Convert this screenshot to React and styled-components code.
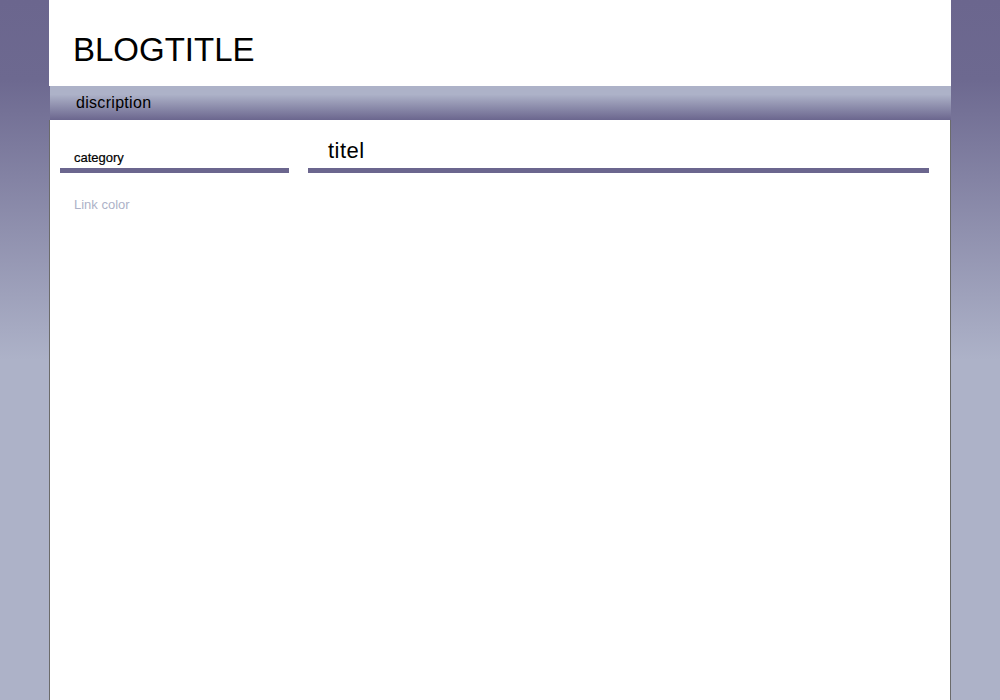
import styled, { createGlobalStyle } from 'styled-components';

const GlobalStyle = createGlobalStyle`
  html, body {
    margin: 0;
    padding: 0;
  }
  body {
    min-height: 700px;
    background-color: #adb2c8;
    background-image: linear-gradient(to bottom, #6b668e 0px, #6d6990 80px, #adb2c8 360px);
    background-repeat: repeat-x;
    background-size: 100% 360px;
    font-family: "Liberation Sans", Arial, sans-serif;
    color: #000;
  }
`;

const Page = styled.div`
  width: 902px;
  margin: 0 auto;
`;

const Header = styled.header`
  height: 86px;
  background: #fff;
  padding-left: 24px;
  box-sizing: border-box;
  display: flex;
  align-items: flex-end;
`;

const BlogTitle = styled.h1`
  margin: 0 0 17px;
  font-size: 33px;
  font-weight: normal;
  line-height: 38px;
`;

const DescBar = styled.div`
  height: 34px;
  margin-left: 1px;
  padding-left: 26px;
  background: linear-gradient(to bottom, #adb2c8 0%, #adb2c8 25%, #6b668e 100%);
  font-size: 16px;
  line-height: 34px;
  letter-spacing: 0.3px;
`;

const Content = styled.div`
  min-height: 580px;
  background: #fff;
  border-left: 1px solid #6b6b6b;
  border-right: 1px solid #6b6b6b;
  display: flex;
  gap: 19px;
  padding: 0 21px 0 10px;
`;

const Sidebar = styled.aside`
  width: 229px;
  flex-shrink: 0;
`;

const Main = styled.main`
  flex: 1;
`;

const SideHeading = styled.h3`
  margin: 30px 0 0;
  padding: 0 0 2px 14px;
  font-size: 13px;
  font-weight: normal;
  line-height: 16px;
  -webkit-text-stroke: 0.2px #000;
  border-bottom: 5px solid #6b668e;
`;

const EntryTitle = styled.h2`
  margin: 18px 0 0;
  padding: 0 0 4px 20px;
  font-size: 22px;
  font-weight: normal;
  line-height: 26px;
  letter-spacing: 0.5px;
  border-bottom: 5px solid #6b668e;
`;

const LinkList = styled.ul`
  list-style: none;
  margin: 22px 0 0;
  padding: 0 0 0 14px;
`;

const SideLink = styled.a`
  color: #adb2c8;
  font-size: 13px;
  line-height: 16px;
  text-decoration: none;
`;

function App() {
  return (
    <>
      <GlobalStyle />
      <Page>
        <Header>
          <BlogTitle>BLOGTITLE</BlogTitle>
        </Header>
        <DescBar>discription</DescBar>
        <Content>
          <Sidebar>
            <SideHeading>category</SideHeading>
            <LinkList>
              <li>
                <SideLink href="#">Link color</SideLink>
              </li>
            </LinkList>
          </Sidebar>
          <Main>
            <EntryTitle>titel</EntryTitle>
          </Main>
        </Content>
      </Page>
    </>
  );
}

export default App;
